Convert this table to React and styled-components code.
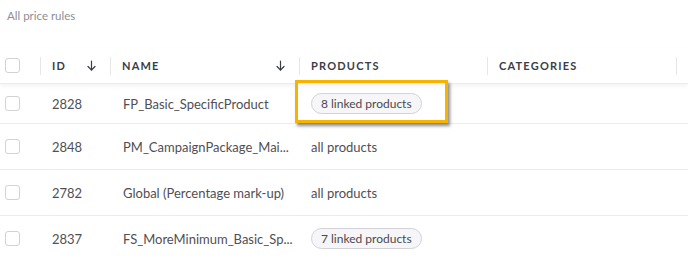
import React from 'react'
import styled, { createGlobalStyle } from 'styled-components'

const GlobalStyle = createGlobalStyle`
    body {
        margin: 0;
        background: #ffffff;
        font-family: Lato, "Open Sans", Arial, sans-serif;
    }
`

const Page = styled.div`
    position: relative;
    width: 688px;
    height: 259px;
    overflow: hidden;
    background: #ffffff;
`

const Title = styled.div`
    height: 48px;
    padding: 9px 7px 0;
    box-sizing: border-box;
    font-size: 11.5px;
    line-height: 14px;
    color: #8e8e93;
`

const Grid = styled.div`
    display: grid;
    grid-template-columns: 40px 70px 189px 188px 189px 12px;
`

const HeadRow = styled(Grid)`
    height: 35px;
    align-items: center;
    border-bottom: 1px solid #ececec;
    box-shadow: 0 2px 4px rgba(0, 0, 0, 0.05);
    position: relative;
`

const HeadCell = styled.div`
    display: flex;
    align-items: center;
    justify-content: space-between;
    height: 18px;
    padding: 0 14px 0 11px;
    border-left: 1px solid #e6e6e6;
    font-size: 11px;
    font-weight: 700;
    letter-spacing: 1.2px;
    color: #3b3d48;
`

const CheckCell = styled.div`
    display: flex;
    align-items: center;
    padding-left: 5px;
`

const Checkbox = styled.span`
    display: block;
    width: 13px;
    height: 13px;
    border: 1px solid #d3d3d6;
    border-radius: 3px;
    background: #fff;
`

const Row = styled(Grid)`
    height: 45px;
    align-items: center;
    border-bottom: 1px solid #ececec;
    &:first-of-type {
        height: 39px;
    }
`

const Cell = styled.div`
    padding-left: ${props => props.pad || '12px'};
    font-size: 13px;
    color: #4f4f55;
    white-space: nowrap;
`

const Pill = styled.span`
    display: inline-block;
    height: 19px;
    line-height: 19px;
    padding: 0 9px;
    border: 1px solid #d2d2d8;
    border-radius: 11px;
    background: #f6f6f8;
    font-size: 12px;
    color: #4a4a4f;
`

const Highlight = styled.div`
    position: absolute;
    left: 295px;
    top: 80px;
    width: 147px;
    height: 37px;
    border: 3px solid #f6b400;
    box-shadow: 2px 3px 3px rgba(0, 0, 0, 0.45);
    pointer-events: none;
`

const SortArrow = () => (
    <svg width="9" height="11" viewBox="0 0 9 11" fill="none" stroke="#3b3d48" strokeWidth="1.2" strokeLinecap="round" strokeLinejoin="round">
        <path d="M4.5 1v9" />
        <path d="M1 6.5l3.5 3.5 3.5-3.5" />
    </svg>
)

const rules = [
    { id: 2828, name: 'FP_Basic_SpecificProduct', products: 8 },
    { id: 2848, name: 'PM_CampaignPackage_Mai...', products: null },
    { id: 2782, name: 'Global (Percentage mark-up)', products: null },
    { id: 2837, name: 'FS_MoreMinimum_Basic_Sp...', products: 7 },
]

const App = () => {
    return (
        <Page>
            <GlobalStyle />
            <Title>All price rules</Title>
            <HeadRow>
                <CheckCell><Checkbox /></CheckCell>
                <HeadCell>ID <SortArrow /></HeadCell>
                <HeadCell>NAME <SortArrow /></HeadCell>
                <HeadCell>PRODUCTS</HeadCell>
                <HeadCell>CATEGORIES</HeadCell>
                <HeadCell />
            </HeadRow>
            <div>
                {rules.map(rule => (
                    <Row key={rule.id}>
                        <CheckCell><Checkbox /></CheckCell>
                        <Cell pad="12px">{rule.id}</Cell>
                        <Cell pad="13px">{rule.name}</Cell>
                        <Cell pad="12px">
                            {rule.products ? <Pill>{rule.products} linked products</Pill> : 'all products'}
                        </Cell>
                        <Cell />
                        <Cell />
                    </Row>
                ))}
            </div>
            <Highlight />
        </Page>
    )
}

export default App
